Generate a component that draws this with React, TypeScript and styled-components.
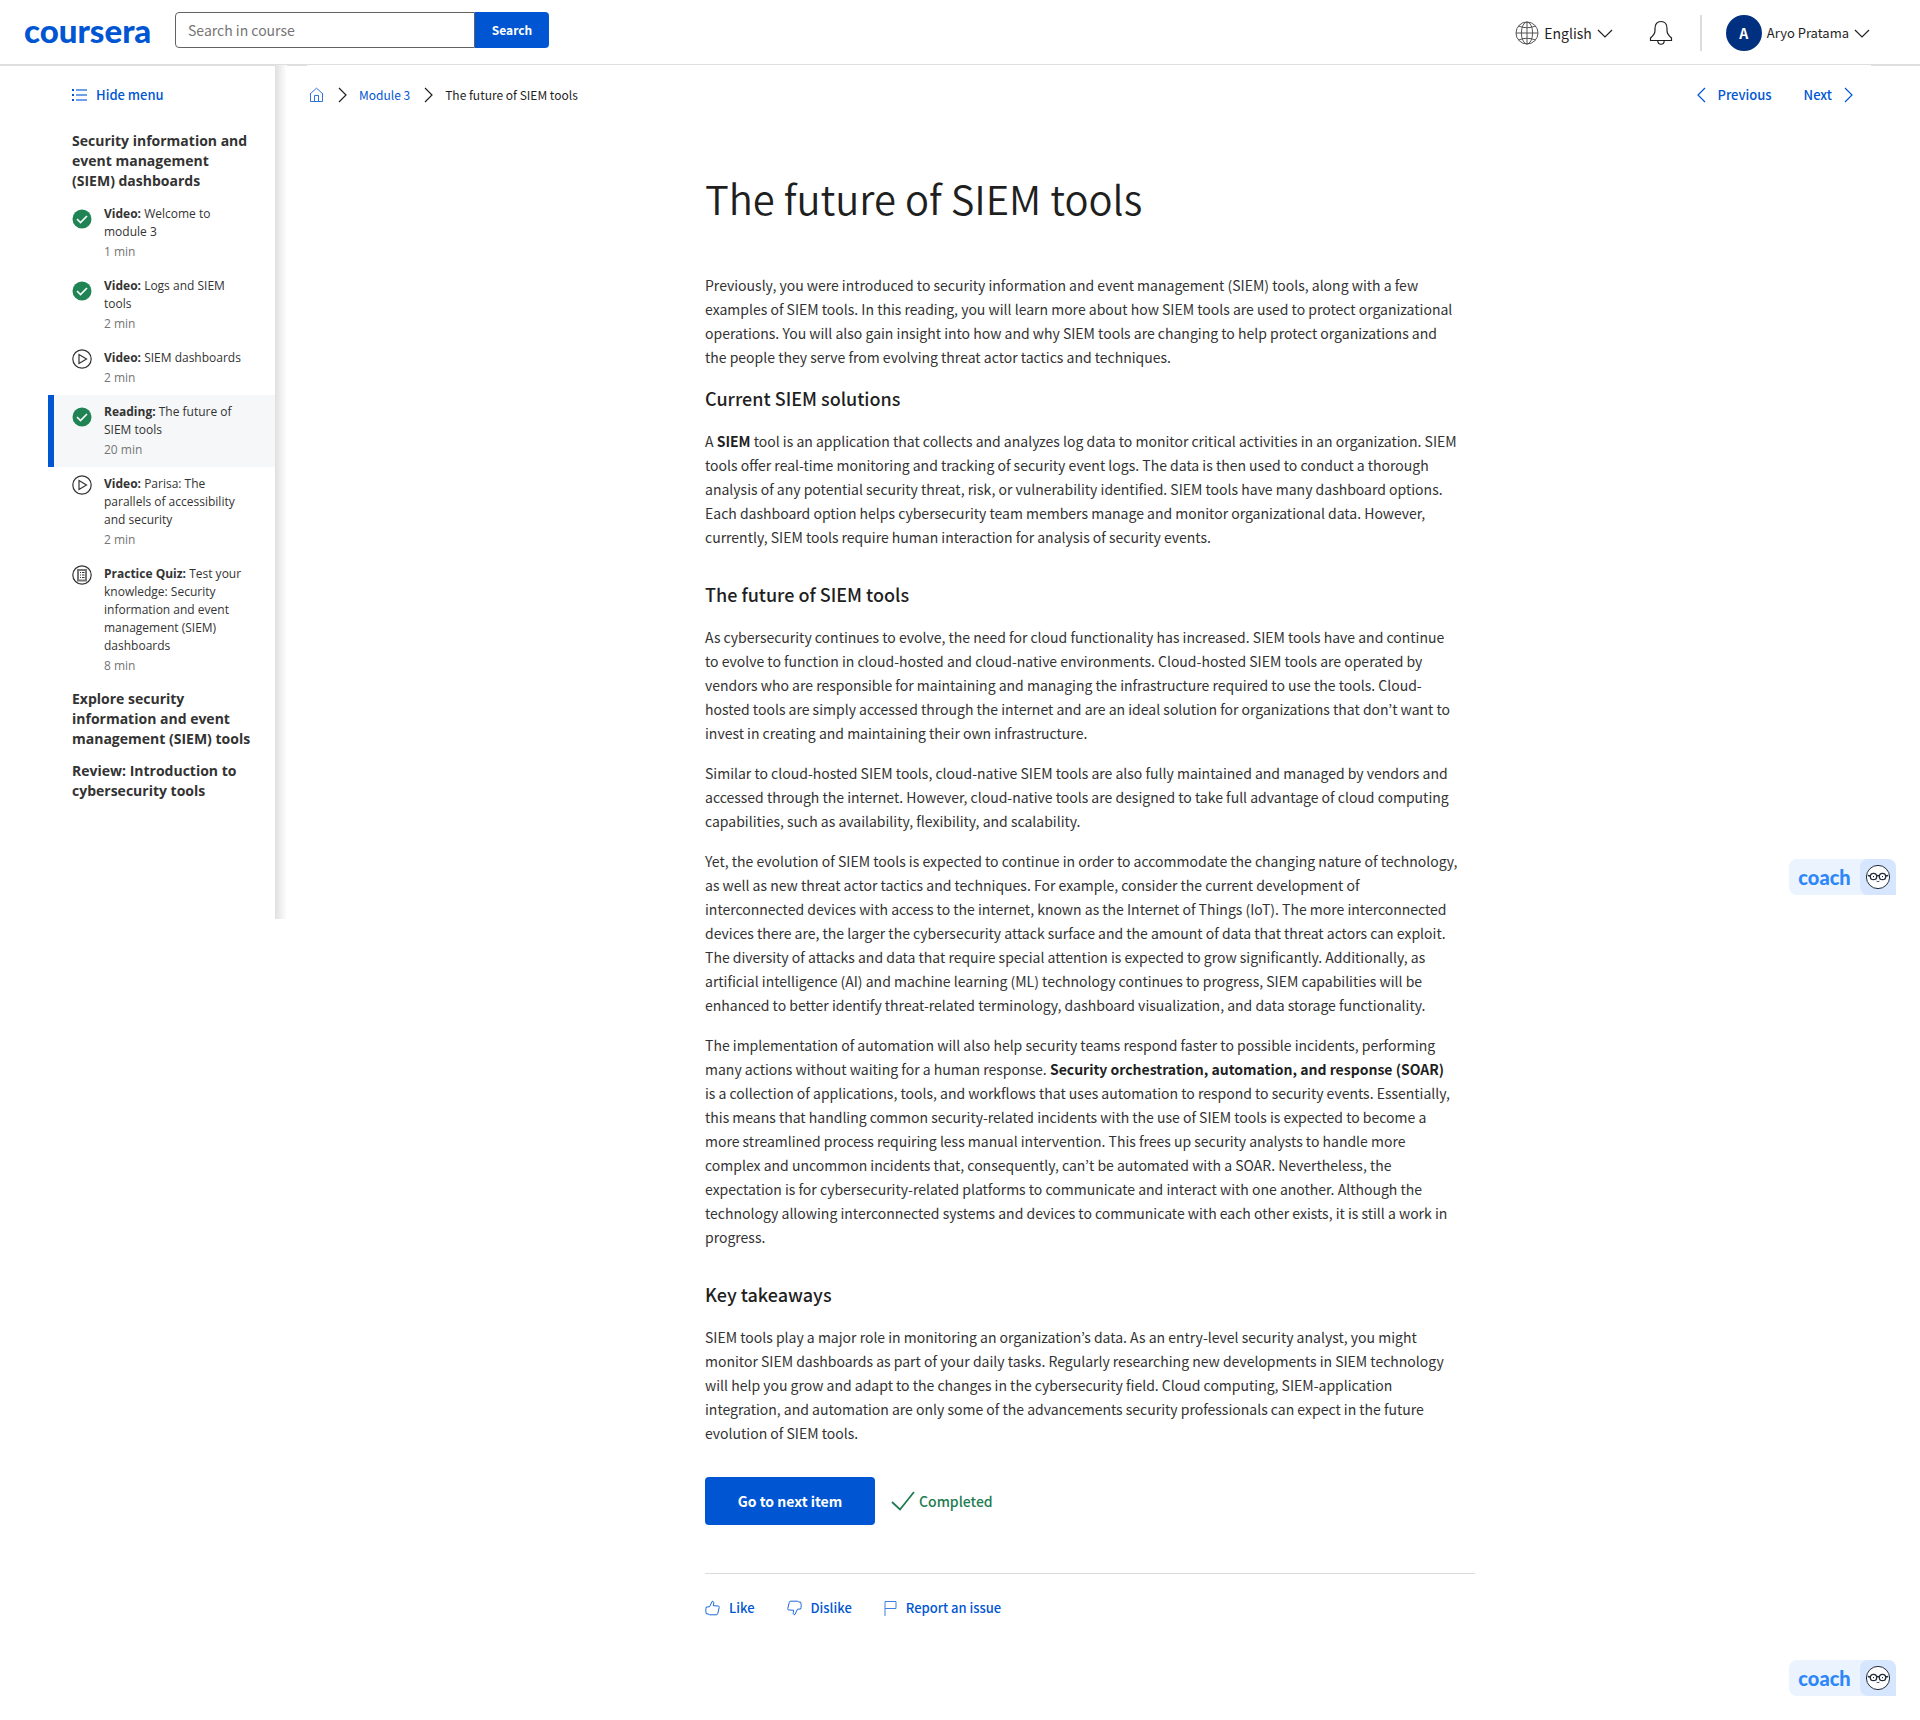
import React from "react";
import styled, { createGlobalStyle, css } from "styled-components";

const blue = "#0056d2";
const ink = "#1f1f1f";
const sans = `"Noto Sans CJK KR", "Noto Sans", sans-serif`;

const GlobalStyle = createGlobalStyle`
  *, *::before, *::after { box-sizing: border-box; }
  body {
    margin: 0;
    background: #fff;
    color: ${ink};
    font-family: ${sans};
    font-size: 14px;
    line-height: 24px;
  }
  button, input { font: inherit; }
  h1, h2, h3, p, ul, ol { margin: 0; padding: 0; }
  ul, ol { list-style: none; }
  svg { display: block; flex: none; }
`;

const Page = styled.div`
  position: relative;
  min-height: 100vh;
`;

/* ---------- header ---------- */

const Header = styled.header`
  display: flex;
  align-items: flex-start;
  height: 66px;
  padding: 12px 50px 0 24px;
  border-bottom: 2px solid #dfdfdf;
`;

const Logo = styled.a`
  width: 151px;
  color: ${blue};
  font-family: Lato, sans-serif;
  font-size: 33px;
  font-weight: 900;
  line-height: 36px;
  text-decoration: none;
`;

const SearchForm = styled.form`
  display: flex;
  height: 36px;
`;

const SearchInput = styled.input`
  width: 300px;
  padding: 0 12px;
  border: 1px solid #636363;
  border-radius: 4px 0 0 4px;
  background: #fff;
  color: ${ink};
  &::placeholder { color: #757575; opacity: 1; }
`;

const SearchButton = styled.button`
  width: 74px;
  padding: 0;
  border: 0;
  border-radius: 0 4px 4px 0;
  background: ${blue};
  color: #fff;
  font-size: 12px;
  font-weight: 700;
`;

const HeaderTools = styled.div`
  display: flex;
  align-items: center;
  height: 36px;
  margin: 3px 0 0 auto;
`;

const ToolButton = styled.button<{ $small?: boolean }>`
  display: flex;
  align-items: center;
  gap: 5px;
  padding: 0;
  border: 0;
  background: none;
  color: ${ink};
  font-size: ${(p) => (p.$small ? 13 : 14)}px;
  white-space: nowrap;
`;

const BellButton = styled(ToolButton)`
  margin: 0 27px 0 36px;
`;

const Divider = styled.span`
  width: 2px;
  height: 36px;
  margin-right: 24px;
  background: #dcdcdc;
`;

const Avatar = styled.span`
  width: 36px;
  height: 36px;
  border-radius: 50%;
  background: #00307f;
  color: #fff;
  font-size: 14px;
  font-weight: 700;
  line-height: 36px;
  text-align: center;
`;

/* ---------- body columns ---------- */

const Columns = styled.div`
  display: flex;
  align-items: flex-start;
  margin-top: -1px;
`;

const Sidebar = styled.nav`
  flex: none;
  width: 227px;
  min-height: 854px;
  margin-left: 48px;
  padding-top: 18px;
  font-family: "Open Sans", sans-serif;
`;

const Shade = styled.div`
  flex: none;
  width: 12px;
  height: 854px;
  background: linear-gradient(to right, #e0e0e0, #fff);
`;

const LinkButton = styled.button`
  display: flex;
  align-items: center;
  gap: 9px;
  padding: 0;
  border: 0;
  background: none;
  color: ${blue};
  font-family: ${sans};
  font-size: 13px;
  font-weight: 500;
  line-height: 24px;
  white-space: nowrap;
`;

const MenuToggle = styled.div`
  padding: 0 24px 18px;
`;

const LessonTitle = styled.h3`
  padding: 6px 20px 6px 24px;
  color: #333;
  font-size: 14px;
  font-weight: 700;
  line-height: 20px;
`;

const Item = styled.li<{ $active?: boolean }>`
  display: flex;
  gap: 12px;
  padding: 8px 24px 8px 18px;
  border-left: 6px solid transparent;
  ${(p) => p.$active && css`
    border-left-color: ${blue};
    background: #f5f7f8;
  `}
`;

const ItemIcon = styled.span<{ $done?: boolean }>`
  flex: none;
  padding-top: ${(p) => (p.$done ? 4 : 0)}px;
`;

const ItemLink = styled.a`
  display: block;
  color: #333;
  font-size: 12px;
  line-height: 18px;
  text-decoration: none;
`;

const ItemTime = styled.span`
  display: block;
  margin-top: 2px;
  color: #757575;
`;

const Main = styled.main`
  flex: 1;
  min-width: 0;
  margin: 0 49px 0 20px;
  padding: 18px 0 24px 2px;
  background: #fff;
`;

const TopBar = styled.div`
  display: flex;
  justify-content: space-between;
  padding-right: 18px;
  font-size: 12px;
`;

const Crumbs = styled.ol`
  display: flex;
  align-items: center;
  gap: 12px;
  li { display: flex; align-items: center; gap: 14px; }
`;

const CrumbLink = styled.a`
  color: ${blue};
  text-decoration: none;
`;

const Pager = styled.div`
  display: flex;
  gap: 32px;
`;

const PagerButton = styled(LinkButton)`
  gap: 12px;
`;

const Article = styled.article`
  width: 100%;
  max-width: 770px;
  margin: 61px auto 0;
`;

const Title = styled.h1`
  color: ${ink};
  font-size: 40px;
  font-weight: 350;
  line-height: 60px;
  margin-bottom: 45px;
`;

const Section = styled.section`
  display: flex;
  flex-direction: column;
  gap: 16px;
  & + & { margin-top: 30px; }
  &:nth-of-type(2) { margin-top: 14px; }
`;

const Heading = styled.h2`
  font-size: 18px;
  font-weight: 500;
  line-height: 30px;
`;

const Text = styled.p`
  max-width: 754px;
  color: #333;
  b { color: ${ink}; }
`;

const Actions = styled.div`
  display: flex;
  align-items: center;
  gap: 16px;
  margin-top: 32px;
  padding-bottom: 48px;
  border-bottom: 1px solid #dcdcdc;
`;

const PrimaryButton = styled.button`
  width: 170px;
  height: 48px;
  padding: 0;
  border: 0;
  border-radius: 4px;
  background: ${blue};
  color: #fff;
  font-size: 14px;
  font-weight: 700;
`;

const Completed = styled.span`
  display: flex;
  align-items: center;
  gap: 4px;
  color: #1d7c50;
  font-weight: 500;
`;

const Feedback = styled.div`
  display: flex;
  gap: 32px;
  margin-top: 22px;
`;

const CoachTab = styled.button<{ $place: "middle" | "bottom" }>`
  position: absolute;
  right: 24px;
  ${(p) => (p.$place === "middle" ? "top: 859px;" : "bottom: 24px;")}
  display: flex;
  width: 107px;
  height: 36px;
  padding: 0;
  border: 0;
  border-radius: 8px 8px 0 8px;
  background: #ebf3ff;
  color: #2d87fb;
  overflow: hidden;
`;

const CoachLabel = styled.span`
  flex: 1;
  font-family: Lato, sans-serif;
  font-size: 20px;
  font-weight: 900;
  line-height: 36px;
`;

const CoachFace = styled.span`
  display: flex;
  align-items: center;
  justify-content: center;
  width: 36px;
  height: 36px;
  border-radius: 8px 0 0 8px;
  background: #d6e6ff;
`;

/* ---------- icons ---------- */

const Chevron = ({ dir, color = ink }: { dir: "left" | "right" | "down"; color?: string }) => {
  const down = dir === "down";
  const d = { left: "M8 1 1 8l7 7", right: "M1 1l7 7-7 7", down: "M1 1l7 7 7-7" }[dir];
  return (
    <svg width={down ? 16 : 9} height={down ? 9 : 16} fill="none" stroke={color} strokeWidth="1.2" aria-hidden>
      <path d={d} />
    </svg>
  );
};

const Globe = () => (
  <svg width="24" height="24" viewBox="0 0 24 24" fill="none" stroke="#555" aria-hidden>
    <circle cx="12" cy="12" r="11" />
    <ellipse cx="12" cy="12" rx="5.6" ry="11" />
    <path d="M1 12h22M12 1v22M3.5 5Q12 8.500 20.500 5M3.500 19Q12 15.500 20.500 19" />
  </svg>
);

const Bell = () => (
  <svg width="24" height="26" viewBox="0 0 24 26" fill="none" stroke={ink} strokeWidth="1.2" aria-hidden>
    <path d="M1.500 20.500v-2.500c3-2.500 4.500-4.500 4.500-7.500V8.500C6 4 8 1.500 12 1.500s6 2.500 6 7v2c0 3 1.500 5 4.500 7.500v2.500z" />
    <path d="M8.800 20.800c0 4.600 6.400 4.600 6.400 0" />
  </svg>
);

const List = () => (
  <svg width="15" height="12" viewBox="0 0 15 12" aria-hidden>
    <path fill={blue} d="M0 0h2v2H0zM0 5h2v2H0zM0 10h2v2H0z" />
    <path stroke="#6f9fe8" strokeWidth="2" d="M4 1h11M4 6h11M4 11h11" />
  </svg>
);

const Home = () => (
  <svg width="15" height="16" viewBox="0 0 15 16" fill="none" stroke="#2f74dc" aria-hidden>
    <path d="M.8 7.200 7.500 1.200l6.700 6M1.500 6.600V14.500h12V6.600M5.500 14.500V8.500h4v6" />
  </svg>
);

const CheckCircle = () => (
  <svg width="20" height="20" viewBox="0 0 20 20" fill="none" aria-hidden>
    <circle cx="10" cy="10" r="9.500" fill="#1f8354" />
    <path d="M5 10l3.500 3.500L15 7" stroke="#fff" strokeWidth="1.600" />
  </svg>
);

const PlayCircle = () => (
  <svg width="20" height="20" viewBox="0 0 20 20" fill="none" stroke="#333" strokeWidth="1.200" aria-hidden>
    <circle cx="10" cy="10" r="9.200" />
    <path d="M7 5.500v9l7.500-4.500z" />
  </svg>
);

const QuizCircle = () => (
  <svg width="20" height="20" viewBox="0 0 20 20" fill="none" aria-hidden>
    <circle cx="10" cy="10" r="9.200" stroke="#333" strokeWidth="1.200" />
    <path d="M6 5h8v10.500H6z" stroke="#777" strokeWidth="2" />
    <path d="M8 7.500h1M8 10h1M8 12.500h1M10 7.500h2.500M10 10h2.500M10 12.500h2.500" stroke="#333" />
  </svg>
);

const Tick = () => (
  <svg width="24" height="20" viewBox="0 0 24 20" fill="none" stroke="#1d7c50" strokeWidth="1.800" aria-hidden>
    <path d="M1 11l8 7.500L23 1" />
  </svg>
);

const Thumb = ({ down }: { down?: boolean }) => (
  <svg width="15" height="16" viewBox="0 0 15 16" fill="none" stroke={blue} strokeWidth="0.900" aria-hidden>
    <path
      transform={down ? "rotate(180 7.500 8)" : undefined}
      d="M4.500 6.800 7.300 1.200c1.500.2 1.600 1.300 1.400 2.300L8.300 5.700l5.200.4c.8.200.9.800.7 1.500l-1.500 6.200c-.2.700-.7 1-1.400 1H4.600l-1.700-.9H1.400C.6 11.600.6 9.300 1.300 7z"
    />
  </svg>
);

const Flag = () => (
  <svg width="13" height="16" viewBox="0 0 13 16" fill="none" stroke="#3f7fe0" aria-hidden>
    <path d="M1 16V1.500h11v7H1" />
  </svg>
);

const Face = () => (
  <svg width="26" height="26" viewBox="0 0 26 26" fill="none" stroke="#222b3a" aria-hidden>
    <circle cx="13" cy="13" r="11.600" fill="#fff" />
    <circle cx="8.500" cy="12.500" r="3.200" strokeWidth="1.300" />
    <circle cx="17.500" cy="12.500" r="3.200" strokeWidth="1.300" />
    <path d="M11.700 12q1.300-1 2.600 0M5.300 12l-2.500-.5M20.700 12l2.500-.5" strokeWidth="1.300" />
    <path d="M8.500 12v1.200M17.500 12v1.200" />
    <path d="M11.500 17.200q1.500 1 3 0" strokeWidth=".8" />
  </svg>
);

/* ---------- data ---------- */

type Status = "done" | "video" | "quiz";
type Lesson = { kind: string; name: string; time: string; status: Status; active?: boolean };

const lessons: Lesson[] = [
  { kind: "Video:", name: "Welcome to module 3", time: "1 min", status: "done" },
  { kind: "Video:", name: "Logs and SIEM tools", time: "2 min", status: "done" },
  { kind: "Video:", name: "SIEM dashboards", time: "2 min", status: "video" },
  { kind: "Reading:", name: "The future of SIEM tools", time: "20 min", status: "done", active: true },
  { kind: "Video:", name: "Parisa: The parallels of accessibility and security", time: "2 min", status: "video" },
  {
    kind: "Practice Quiz:",
    name: "Test your knowledge: Security information and event management (SIEM) dashboards",
    time: "8 min",
    status: "quiz",
  },
];

const icons: Record<Status, React.ReactNode> = {
  done: <CheckCircle />,
  video: <PlayCircle />,
  quiz: <QuizCircle />,
};

const Coach = ({ place }: { place: "middle" | "bottom" }) => (
  <CoachTab type="button" $place={place}>
    <CoachLabel>coach</CoachLabel>
    <CoachFace><Face /></CoachFace>
  </CoachTab>
);

export default function App() {
  return (
    <Page>
      <GlobalStyle />
      <Header>
        <Logo href="#">coursera</Logo>
        <SearchForm role="search" onSubmit={(e) => e.preventDefault()}>
          <SearchInput type="text" aria-label="Search in course" placeholder="Search in course" />
          <SearchButton type="submit">Search</SearchButton>
        </SearchForm>
        <HeaderTools>
          <ToolButton type="button"><Globe />English<Chevron dir="down" /></ToolButton>
          <BellButton type="button" aria-label="Notifications"><Bell /></BellButton>
          <Divider />
          <ToolButton type="button" $small><Avatar>A</Avatar>Aryo Pratama<Chevron dir="down" /></ToolButton>
        </HeaderTools>
      </Header>

      <Columns>
        <Sidebar>
          <MenuToggle>
            <LinkButton type="button"><List />Hide menu</LinkButton>
          </MenuToggle>
          <LessonTitle>Security information and event management (SIEM) dashboards</LessonTitle>
          <ul>
            {lessons.map((l) => (
              <Item key={l.name} $active={l.active}>
                <ItemIcon $done={l.status === "done"}>{icons[l.status]}</ItemIcon>
                <ItemLink href="#">
                  <b>{l.kind}</b> {l.name}
                  <ItemTime>{l.time}</ItemTime>
                </ItemLink>
              </Item>
            ))}
          </ul>
          <LessonTitle>Explore security information and event management (SIEM) tools</LessonTitle>
          <LessonTitle>Review: Introduction to cybersecurity tools</LessonTitle>
        </Sidebar>
        <Shade />

        <Main>
          <TopBar>
            <Crumbs>
              <li><CrumbLink href="#" aria-label="Home"><Home /></CrumbLink><Chevron dir="right" /></li>
              <li><CrumbLink href="#">Module 3</CrumbLink><Chevron dir="right" /></li>
              <li>The future of SIEM tools</li>
            </Crumbs>
            <Pager>
              <PagerButton type="button"><Chevron dir="left" color={blue} />Previous</PagerButton>
              <PagerButton type="button">Next<Chevron dir="right" color={blue} /></PagerButton>
            </Pager>
          </TopBar>

          <Article>
            <Title>The future of SIEM tools</Title>
            <Section>
              <Text>
                Previously, you were introduced to security information and event management (SIEM) tools, along with a few
                examples of SIEM tools. In this reading, you will learn more about how SIEM tools are used to protect organizational
                operations. You will also gain insight into how and why SIEM tools are changing to help protect organizations and
                the people they serve from evolving threat actor tactics and techniques.
              </Text>
            </Section>
            <Section>
              <Heading>Current SIEM solutions</Heading>
              <Text>
                A <b>SIEM</b> tool is an application that collects and analyzes log data to monitor critical activities in an organization. SIEM
                tools offer real-time monitoring and tracking of security event logs. The data is then used to conduct a thorough
                analysis of any potential security threat, risk, or vulnerability identified. SIEM tools have many dashboard options.
                Each dashboard option helps cybersecurity team members manage and monitor organizational data. However,
                currently, SIEM tools require human interaction for analysis of security events.
              </Text>
            </Section>
            <Section>
              <Heading>The future of SIEM tools</Heading>
              <Text>
                As cybersecurity continues to evolve, the need for cloud functionality has increased. SIEM tools have and continue
                to evolve to function in cloud-hosted and cloud-native environments. Cloud-hosted SIEM tools are operated by
                vendors who are responsible for maintaining and managing the infrastructure required to use the tools. Cloud-hosted
                tools are simply accessed through the internet and are an ideal solution for organizations that don’t want to
                invest in creating and maintaining their own infrastructure.
              </Text>
              <Text>
                Similar to cloud-hosted SIEM tools, cloud-native SIEM tools are also fully maintained and managed by vendors and
                accessed through the internet. However, cloud-native tools are designed to take full advantage of cloud computing
                capabilities, such as availability, flexibility, and scalability.
              </Text>
              <Text>
                Yet, the evolution of SIEM tools is expected to continue in order to accommodate the changing nature of technology,
                as well as new threat actor tactics and techniques. For example, consider the current development of
                interconnected devices with access to the internet, known as the Internet of Things (IoT). The more interconnected
                devices there are, the larger the cybersecurity attack surface and the amount of data that threat actors can exploit.
                The diversity of attacks and data that require special attention is expected to grow significantly. Additionally, as
                artificial intelligence (AI) and machine learning (ML) technology continues to progress, SIEM capabilities will be
                enhanced to better identify threat-related terminology, dashboard visualization, and data storage functionality.
              </Text>
              <Text>
                The implementation of automation will also help security teams respond faster to possible incidents, performing
                many actions without waiting for a human response. <b>Security orchestration, automation, and response (SOAR)</b>{" "}
                is&nbsp;a collection of applications, tools, and workflows that uses automation to respond to security events. Essentially,
                this means that handling common security-related incidents with the use of SIEM tools is expected to become a
                more streamlined process requiring less manual intervention. This frees up security analysts to handle more
                complex and uncommon incidents that, consequently, can’t be automated with a SOAR. Nevertheless, the
                expectation is for cybersecurity-related platforms to communicate and interact with one another. Although the
                technology allowing interconnected systems and devices to communicate with each other exists, it is still a work in
                progress.
              </Text>
            </Section>
            <Section>
              <Heading>Key takeaways</Heading>
              <Text>
                SIEM tools play a major role in monitoring an organization’s data. As an entry-level security analyst, you might
                monitor SIEM dashboards as part of your daily tasks. Regularly researching new developments in SIEM technology
                will help you grow and adapt to the changes in the cybersecurity field. Cloud computing, SIEM-application
                integration, and automation are only some of the advancements security professionals can expect in the future
                evolution of SIEM tools.
              </Text>
            </Section>
            <Actions>
              <PrimaryButton type="button">Go to next item</PrimaryButton>
              <Completed><Tick />Completed</Completed>
            </Actions>
            <Feedback>
              <LinkButton type="button"><Thumb />Like</LinkButton>
              <LinkButton type="button"><Thumb down />Dislike</LinkButton>
              <LinkButton type="button"><Flag />Report an issue</LinkButton>
            </Feedback>
          </Article>
        </Main>
      </Columns>

      <Coach place="middle" />
      <Coach place="bottom" />
    </Page>
  );
}
